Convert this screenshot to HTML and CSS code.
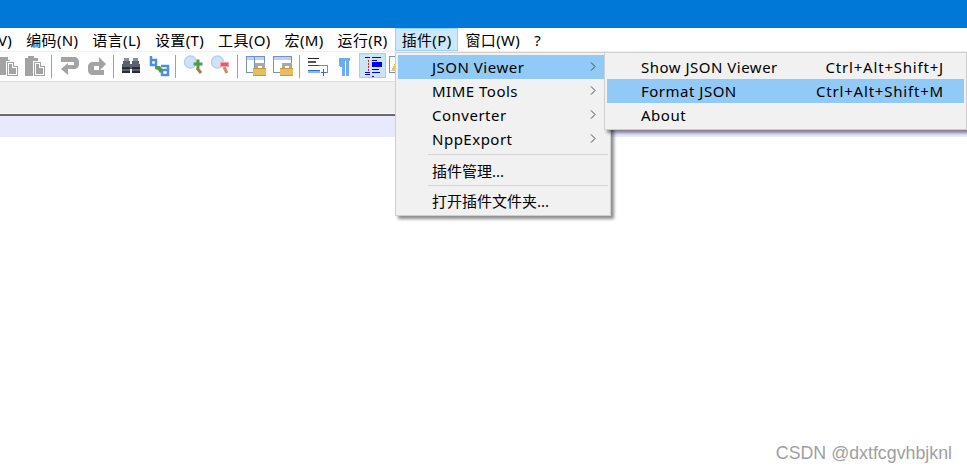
FILE: index.html
```html
<!DOCTYPE html>
<html lang="zh-CN">
<head>
<meta charset="utf-8">
<title>Notepad++</title>
<link rel="stylesheet" href="styles.css">
</head>
<body>
<div class="titlebar"></div>
<nav class="menubar">
  <span class="mi first">V)</span>
  <span class="mi">编码(N)</span>
  <span class="mi">语言(L)</span>
  <span class="mi">设置(T)</span>
  <span class="mi">工具(O)</span>
  <span class="mi">宏(M)</span>
  <span class="mi">运行(R)</span>
  <span class="mi open">插件(P)</span>
  <span class="mi">窗口(W)</span>
  <span class="mi">?</span>
</nav>
<div class="toolbar">
  <svg class="tool" viewBox="0 0 27 25" shape-rendering="crispEdges"><path fill="#a3a3a3" d="M6 4h8v3h2v5h-2v10H6z"/><path fill="#fff" d="M12 8h8l5 4v12H12z"/><path fill="#a3a3a3" d="M13 9h7v4h4v10H13z"/><path fill="#fff" d="M14 10h5v4h4v8h-9z"/><path fill="#a3a3a3" d="M15 11h3v4h4v6h-7z"/></svg>
  <svg class="tool" viewBox="0 0 27 25" shape-rendering="crispEdges"><path fill="#a3a3a3" d="M4 5h3V3h6v2h4v18H4z"/><path fill="#fff" d="M12 8h8l5 4v12H12z"/><path fill="#a3a3a3" d="M13 9h7v4h4v10H13z"/><path fill="#fff" d="M14 10h5v4h4v8h-9z"/><path fill="#a3a3a3" d="M15 11h3v4h4v6h-7z"/></svg>
  <i class="sep"></i>
  <svg class="tool" viewBox="0 0 27 25"><path fill="#a3a3a3" d="M5 4h13c3 0 5 2 5 5v2c0 3-2 5-5 5h-6v6l-7-6 7-6v2h6V9H5z"/></svg>
  <svg class="tool" viewBox="0 0 27 25"><path fill="#a3a3a3" d="M23 11l-7-7v5h-6c-3 0-5 2-5 5v3c0 3 2 5 5 5h11v-5H11v-4h5v5z"/></svg>
  <i class="sep"></i>
  <svg class="tool" viewBox="0 0 27 25" shape-rendering="crispEdges"><path fill="#8a8f9c" d="M6 5h5v3H6zM15 5h5v3h-5z"/><path fill="#5d616e" d="M5 8h7v3h2V8h7v3h1v9h-8v-4h-2v4H4v-9h1z"/><path fill="#2b2c33" d="M4 14h8v2H4zM14 14h8v2h-8zM4 18h8v2H4zM14 18h8v2h-8z"/></svg>
  <svg class="tool" viewBox="0 0 27 25"><g fill="none" stroke="#4f8de0" stroke-width="2.500"><path d="M6 3v9h5v-5H6"/><path d="M16 13h7v9h-6v-5h6"/></g><path fill="#4a9a50" d="M10 13l5 0 3 4-3 3-2-3-3-1z"/></svg>
  <i class="sep"></i>
  <svg class="tool" viewBox="0 0 27 25"><circle cx="10.500" cy="9" r="6" fill="#cfe2f8" stroke="#b5d0f0" stroke-width="1.500"/><path stroke="#a97a45" stroke-width="3" d="M17 15l4 5"/><path fill="#4f9a4f" d="M13.500 9.500h3v-3h3v3h3v3h-3v3h-3v-3h-3z"/></svg>
  <svg class="tool" viewBox="0 0 27 25"><circle cx="10.500" cy="9" r="6" fill="#cfe2f8" stroke="#b5d0f0" stroke-width="1.500"/><path stroke="#c99068" stroke-width="3" d="M17 14l3 6"/><rect x="13.500" y="9.500" width="8" height="4" fill="#e85a66" stroke="#f4a0a8"/></svg>
  <i class="sep"></i>
  <svg class="tool" viewBox="0 0 27 25" shape-rendering="crispEdges"><rect x="4.500" y="3.500" width="18" height="16" fill="#fff" stroke="#6f93c4"/><path fill="#bcd2ee" d="M5 4h17v3H5z"/><path fill="#6f93c4" d="M12 4h1v15h-1z"/><path fill="none" stroke="#a8a8a8" stroke-width="3" d="M14 15V11h7v4"/><path fill="#e9bd5e" d="M11 15h13v8H11z"/><path fill="#c99a3c" d="M11 22h13v1H11zM11 15h13v1H11z"/></svg>
  <svg class="tool" viewBox="0 0 27 25" shape-rendering="crispEdges"><rect x="4.500" y="3.500" width="18" height="16" fill="#fff" stroke="#6f93c4"/><path fill="#bcd2ee" d="M5 4h17v3H5z"/><path fill="none" stroke="#a8a8a8" stroke-width="3" d="M14 15V11h7v4"/><path fill="#e9bd5e" d="M11 15h13v8H11z"/><path fill="#c99a3c" d="M11 22h13v1H11zM11 15h13v1H11z"/></svg>
  <i class="sep"></i>
  <svg class="tool" viewBox="0 0 27 25" shape-rendering="crispEdges"><path fill="#222" d="M4 5h11v1H4z"/><path fill="#555" d="M4 8h8v2H4z"/><path fill="#444" d="M4 12h11v1H4z"/><path fill="#5d93d6" d="M15 12h9v8h-4v-1h3v-6h-8z"/><path fill="#8fb6e6" d="M4 17h12v3H4z"/><path fill="#2f6fc4" d="M4 17h12v1H4zM19 16h1v7h-1zM17 19h5v1h-5z"/></svg>
  <svg class="tool" viewBox="0 0 27 25" shape-rendering="crispEdges"><path fill="#6aaef0" d="M8 5h11v3h-1v15h-3V8h-1v15h-3V14H9V13H8z"/></svg>
  <svg class="tool active" viewBox="0 0 27 25" shape-rendering="crispEdges"><path fill="#0000e6" d="M6 4h5v1H6zM13 4h9v1h-9zM13 7h5v1h-5zM13 9h10v5H13zM13 16h7v1h-7zM6 19h5v1H6zM6 21h5v1H6zM13 19h8v1h-8zM13 23h2v1h-2z"/><path fill="#e02020" d="M9 7h1v2H9zM9 10h1v2H9zM9 13h1v2H9zM9 16h1v2H9z"/></svg>
  <svg class="tool" viewBox="0 0 27 25" shape-rendering="crispEdges"><rect x="3.500" y="3.500" width="14" height="16" fill="#fff" stroke="#6f93c4"/><path fill="#e9c766" d="M5 18l4-8 3 8z"/></svg>
</div>
<div class="tabbar"></div>
<div class="currentline"></div>

<div class="menu plugins">
  <div class="row hot"><span class="latin">JSON Viewer</span><svg class="chev" viewBox="0 0 6 9"><path d="M1 .5l4 4-4 4" fill="none" stroke="#444"/></svg></div>
  <div class="row"><span class="latin">MIME Tools</span><svg class="chev" viewBox="0 0 6 9"><path d="M1 .5l4 4-4 4" fill="none" stroke="#444"/></svg></div>
  <div class="row"><span class="latin">Converter</span><svg class="chev" viewBox="0 0 6 9"><path d="M1 .5l4 4-4 4" fill="none" stroke="#444"/></svg></div>
  <div class="row"><span class="latin">NppExport</span><svg class="chev" viewBox="0 0 6 9"><path d="M1 .5l4 4-4 4" fill="none" stroke="#444"/></svg></div>
  <div class="rule"></div>
  <div class="row"><span>插件管理...</span></div>
  <div class="rule tight"></div>
  <div class="row"><span>打开插件文件夹...</span></div>
</div>
<div class="menu json">
  <div class="row"><span class="latin">Show JSON Viewer</span><span class="keys">Ctrl+Alt+Shift+J</span></div>
  <div class="row hot"><span class="latin">Format JSON</span><span class="keys">Ctrl+Alt+Shift+M</span></div>
  <div class="row"><span class="latin">About</span></div>
</div>
<div class="watermark">CSDN @dxtfcgvhbjknl</div>
</body>
</html>
```
FILE: styles.css
```css
html, body {
  margin: 0;
  height: 100%;
  background: #fff;
  overflow: hidden;
}
body {
  font-family: "Noto Sans", "Noto Sans CJK SC", sans-serif;
  font-size: 15px;
  color: #000;
  position: relative;
}
.titlebar {
  height: 28px;
  background: #0078d7;
}
.menubar {
  display: flex;
  height: 23px;
  line-height: 25px;
  border-bottom: 1px solid #f0f0f0;
  background: #fff;
  letter-spacing: .35px;
}
.mi {
  padding: 0 7px;
  white-space: nowrap;
}
.mi.first {
  margin-left: -9px;
}
.mi.open {
  background: #cce8ff;
  box-shadow: inset 0 0 0 1px #99d1ff;
}
.toolbar {
  display: flex;
  height: 28px;
  padding-top: 1px;
  margin-left: -6px;
  background: #fff;
  border-bottom: 1px solid #dcdcdc;
}
.tool {
  flex: none;
  width: 27px;
  height: 25px;
}
.tool.active {
  margin-left: 1px;
  background: #cce4f7;
  box-shadow: inset 0 0 0 1px #99d1ff;
}
.sep {
  flex: none;
  width: 8px;
  height: 23px;
  margin-top: 2px;
  background: linear-gradient(#a0a0a0, #a0a0a0) 3px 0 / 1px 100% no-repeat;
}
.tabbar {
  height: 31px;
  background: #f0f0f0;
  border-bottom: 1px solid #fcfcfc;
}
.currentline {
  height: 21px;
  border-top: 2px solid #6a6a6a;
  background: #e8e8ff;
}
.menu {
  position: absolute;
  top: 52px;
  box-sizing: border-box;
  padding: 2px;
  background: #f1f1f1;
  border: 1px solid #cfcfcf;
  box-shadow: 3px 3px 3px rgba(0, 0, 0, .45);
}
.plugins {
  left: 395px;
  width: 216px;
}
.json {
  left: 604px;
  width: 363px;
}
.row {
  display: flex;
  justify-content: space-between;
  align-items: center;
  box-sizing: border-box;
  height: 24px;
  padding-bottom: 1px;
  white-space: nowrap;
}
.plugins .row {
  padding-left: 34px;
  padding-right: 12px;
}
.json .row {
  padding-left: 34px;
  padding-right: 20px;
}
.latin {
  letter-spacing: .5px;
}
.keys {
  letter-spacing: .8px;
}
.row.hot {
  background: #91c9f7;
}
.chev {
  width: 6px;
  height: 9px;
}
.rule {
  height: 1px;
  margin: 3px 0 4px 30px;
  background: #d4d4d4;
}
.rule.tight {
  margin: 2px 0 3px 30px;
}
.watermark {
  position: absolute;
  right: 15px;
  bottom: 8px;
  font-family: "Liberation Sans", sans-serif;
  font-size: 17.800px;
  color: #a0a0a0;
  white-space: nowrap;
}
```
